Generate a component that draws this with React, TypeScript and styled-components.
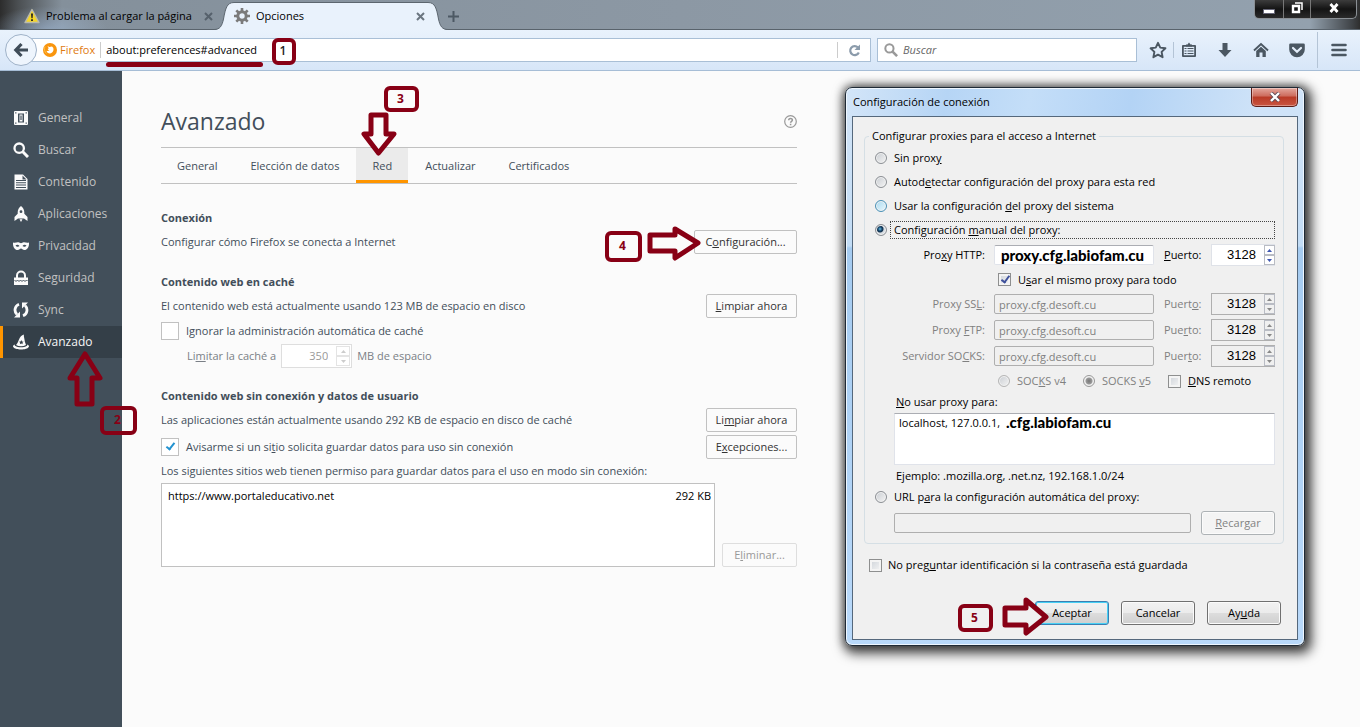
import React from 'react';
import styled, { createGlobalStyle, css } from 'styled-components';

const MARK = '#880015';

const GlobalStyle = createGlobalStyle`
  *, *::before, *::after { box-sizing: border-box; }
  body { margin: 0; background: #fbfbfb; font-family: "Open Sans", "Noto Sans", sans-serif; font-size: 11px; line-height: 18px; color: #000; }
  button, input, textarea { font: inherit; color: inherit; margin: 0; }
  u { text-underline-offset: 1px; }
`;

const Page = styled.div`
  position: relative;
  display: flex;
  flex-direction: column;
  min-height: 100vh;
  overflow: hidden;
`;

/* ---------- window title bar and tabs ---------- */

const TabStrip = styled.header`
  display: flex;
  height: 30px;
  background:
    radial-gradient(ellipse 60px 24px at 48px 30px, rgba(160, 185, 215, 0.6), transparent),
    linear-gradient(90deg, #2c2c2c 0, #4b4f52 18px, #84909b 62px, #8c98a4 50%, #93a1ae 1310px, #3f4347 1352px, #2e2e2e 100%);
  box-shadow: inset 0 -1px 0 #59636c;
`;

const InactiveTab = styled.div`
  display: flex;
  align-items: center;
  width: 214px;
  height: 30px;
  padding: 2px 0 0 24px;
  gap: 6px;
`;

const ActiveTab = styled.div`
  display: flex;
  height: 30px;
`;

const ActiveTabBody = styled.div`
  display: flex;
  align-items: center;
  width: 194px;
  gap: 6px;
  height: 28px;
  margin-top: 2px;
  padding: 0 2px 1px 0;
  border-top: 1px solid #5c666f;
  background: #e9f2fc;
`;

const TabTitle = styled.span`
  flex: 1;
  white-space: nowrap;
  overflow: hidden;
`;

const GlyphButton = styled.button`
  display: flex;
  align-items: center;
  justify-content: center;
  flex: none;
  border: 0;
  padding: 0;
  background: none;
`;

const NewTab = styled(GlyphButton)`
  width: 11px;
  height: 32px;
`;

const WindowButtons = styled.div`
  display: flex;
  height: 19px;
  margin: 0 3px 0 auto;
  border: 1px solid #8b9095;
  border-top: 0;
  border-radius: 0 0 5px 5px;
  background: linear-gradient(#3c3c3c, #141414 50%, #2a2a2a);
  overflow: hidden;
`;

const WindowButton = styled(GlyphButton)<{ $w: number }>`
  width: ${(p) => p.$w}px;
  padding-bottom: 2px;
  & + & { border-left: 1px solid #777; }
`;

/* ---------- navigation toolbar ---------- */

const NavBar = styled.nav`
  display: flex;
  align-items: center;
  height: 41px;
  padding-left: 5px;
  border-bottom: 1px solid #a6bdd6;
  background: linear-gradient(#e9f2fc, #d7e6f8);
`;

const BackButton = styled(GlyphButton)`
  position: relative;
  z-index: 1;
  width: 32px;
  height: 32px;
  border: 1px solid #9fb2c8;
  border-radius: 50%;
  background: #eef5fd;
`;

const Field = styled.div`
  display: flex;
  align-items: center;
  height: 24px;
  border: 1px solid #a9bfd6;
  background: #fff;
`;

const UrlField = styled(Field)`
  flex: 1;
  margin-left: -6px;
  padding-left: 11px;
`;

const Identity = styled.span`
  display: flex;
  align-items: center;
  gap: 3px;
  color: #e07a10;
  padding-right: 5px;
  border-right: 1px solid #ccc;
  height: 16px;
`;

const BareInput = styled.input`
  flex: 1;
  min-width: 0;
  border: 0;
  padding: 0 5px;
  background: none;
  outline: 0;
  &::placeholder { color: #666; font-style: italic; opacity: 1; }
`;

const Reload = styled(GlyphButton)`
  width: 33px;
  height: 16px;
  border-left: 1px solid #ccc;
`;

const SearchField = styled(Field)`
  width: 260px;
  margin: 0 6px;
  padding-left: 6px;
`;

const ToolButton = styled(GlyphButton)<{ $w: number }>`
  width: ${(p) => p.$w}px;
  height: 20px;
`;

const Divider = styled.span<{ $tall?: boolean }>`
  width: 1px;
  height: ${(p) => (p.$tall ? 36 : 16)}px;
  background: #b4c4d6;
`;

/* ---------- preferences page ---------- */

const Body = styled.div`
  display: flex;
  flex: 1;
`;

const Sidebar = styled.nav`
  flex: none;
  width: 122px;
  padding-top: 31px;
  background: #424f5a;
`;

const Category = styled.a<{ $active?: boolean }>`
  display: flex;
  align-items: center;
  gap: 9px;
  height: 32px;
  padding-left: 10px;
  border-left: 3px solid transparent;
  font-size: 12px;
  color: #c1c1c1;
  text-decoration: none;
  ${(p) => p.$active && css`
    border-left-color: #ff9500;
    background: #343f48;
    color: #f6f6f6;
  `}
`;

const Main = styled.main`
  flex: 1;
  min-width: 0;
  padding: 34px 39px 40px;
  color: #424e5a;
`;

const Content = styled.div`
  max-width: 636px;
`;

const TitleRow = styled.div`
  display: flex;
  align-items: center;
  justify-content: space-between;
  height: 32px;
  margin-bottom: 10px;
`;

const Title = styled.h1`
  margin: 0;
  font-size: 23px;
  font-weight: 400;
  line-height: 32px;
`;

const Tabs = styled.div`
  display: flex;
  gap: 1px;
  height: 37px;
  margin-bottom: 25px;
  border: solid #c1c1c1;
  border-width: 1px 0;
`;

const Tab = styled.button<{ $active?: boolean }>`
  border: 0;
  border-bottom: 3px solid ${(p) => (p.$active ? '#ff9500' : 'transparent')};
  background: ${(p) => (p.$active ? '#ebebeb' : 'none')};
  padding: 3px 16px 0;
`;

const Section = styled.section`
  display: flex;
  flex-direction: column;
  gap: 3px;
  margin-bottom: 19px;
`;

const Heading = styled.h2`
  margin: 0;
  font-size: 11px;
  line-height: 18px;
  font-weight: 700;
`;

const Row = styled.div<{ $h?: number }>`
  display: flex;
  align-items: center;
  justify-content: space-between;
  height: ${(p) => p.$h ?? 24}px;
  white-space: nowrap;
`;

const FlatButton = styled.button<{ $w: number }>`
  width: ${(p) => p.$w}px;
  height: 24px;
  flex: none;
  border: 1px solid #c1c1c1;
  border-radius: 2px;
  padding: 0;
  background: #fbfbfb;
  color: #333;
  &:disabled { color: #999; border-color: #dedede; }
`;

const CheckLabel = styled.label`
  display: flex;
  align-items: center;
  gap: 7px;
`;

const FlatCheck = styled.input`
  appearance: none;
  width: 18px;
  height: 18px;
  border: 1px solid #c1c1c1;
  background: #fff;
  &:checked::after {
    content: "";
    display: block;
    width: 5px;
    height: 9px;
    margin: 2px 0 0 6px;
    border: solid #2292d0;
    border-width: 0 2px 2px 0;
    transform: rotate(38deg);
  }
`;

const LimitRow = styled.div`
  display: flex;
  align-items: center;
  height: 24px;
  gap: 5px;
  padding-left: 26px;
  color: #7a7f86;
`;

const LimitBox = styled.span`
  display: flex;
  align-items: center;
  width: 71px;
  height: 24px;
  padding: 2px 1px;
  border: 1px solid #dedede;
  background: #fff;
  color: #999;
`;

const NumberInput = styled.input`
  flex: 1;
  min-width: 0;
  border: 0;
  padding: 0 8px 0 0;
  background: none;
  text-align: right;
  outline: 0;
`;

const Steppers = styled.span<{ $w: number }>`
  display: flex;
  flex-direction: column;
  width: ${(p) => p.$w}px;
  height: 20px;
`;

const StepButton = styled(GlyphButton)<{ $line: string; $ink: string }>`
  flex: 1;
  border: 1px solid ${(p) => p.$line};
  color: ${(p) => p.$ink};
`;

const SitesRow = styled.div`
  display: flex;
  align-items: flex-end;
  gap: 7px;
`;

const SiteList = styled.div`
  flex: 1;
  height: 84px;
  padding: 3px 3px 3px 6px;
  border: 1px solid #c1c1c1;
  background: #fff;
`;

const SiteTable = styled.table`
  width: 100%;
  border-collapse: collapse;
  color: #000;
  td { padding: 0; }
  td:last-child { text-align: right; }
`;

/* ---------- connection dialog ---------- */

const Dialog = styled.div`
  position: absolute;
  left: 845px;
  top: 87px;
  width: 460px;
  border: 1px solid #1f2a36;
  border-radius: 7px;
  padding: 0 6px 5px;
  background:
    linear-gradient(100deg, #d3e5f8 0, #b6d5f5 22%, #c4def8 40%, #b3d3f5 62%, #cfe3f8 90%) top / 100% 29px no-repeat,
    linear-gradient(#d3e4f6 0, #c2dcf5 158px, #a5cbf0 160px, #b9d9fa 100%);
  box-shadow: inset 0 0 0 1px #eef6fe, 3px 4px 12px 4px rgba(0, 0, 0, 0.65), 0 0 10px 1px rgba(0, 0, 0, 0.45);
`;

const DialogTitle = styled.div`
  display: flex;
  align-items: flex-start;
  justify-content: space-between;
  height: 28px;
  padding-left: 1px;
  h2 { margin: 5px 0 0; font-size: 11px; font-weight: 400; line-height: 18px; }
`;

const CloseButton = styled(GlyphButton)`
  width: 47px;
  height: 19px;
  border: 1px solid #5d1c16;
  border-top: 0;
  border-radius: 0 0 5px 5px;
  background: linear-gradient(#e3a79d, #cd6b5c 45%, #b93a26 50%, #c95541);
  box-shadow: inset 0 0 0 1px rgba(255, 255, 255, 0.35);
`;

const Client = styled.form`
  border: 1px solid #55687c;
  padding: 10px 13px 14px 11px;
  background: #f0f0f0;
`;

const Group = styled.fieldset`
  min-width: 0;
  margin: 0;
  padding: 1px 8px 8px 10px;
  border: 1px solid #d5dfe5;
  border-radius: 4px;
  legend { padding: 0 3px; margin-left: -6px; }
`;

const Choice = styled.label<{ $muted?: boolean }>`
  display: flex;
  align-items: center;
  height: 24px;
  gap: 7px;
  color: ${(p) => (p.$muted ? '#808080' : '#000')};
`;

const Focused = styled.span`
  flex: 1;
  height: 18px;
  margin-left: -4px;
  padding-left: 3px;
  border: 1px dotted #444;
  line-height: 16px;
`;

const Radio = styled.input<{ $hot?: boolean }>`
  appearance: none;
  flex: none;
  width: 12px;
  height: 12px;
  border: 1px solid ${(p) => (p.$hot ? '#4a90b5' : '#8b8f94')};
  border-radius: 50%;
  background: ${(p) => (p.$hot ? 'linear-gradient(135deg, #a9d9ef, #e9f7fd)' : 'linear-gradient(135deg, #c9cdd2, #f4f4f4)')};
  box-shadow: inset 0 0 0 1px #f2f2f2;
  &:checked { background: radial-gradient(circle at 4px 4px, #6cc3e8 0, #17466d 2px, #16344f 3px, #d8dde2 4px); }
  &:disabled { border-color: #b5b5b5; }
  &:disabled:checked { border-color: #999; background: radial-gradient(circle, #777 0, #999 3px, #eee 4px); }
`;

const Check = styled.input`
  appearance: none;
  flex: none;
  width: 13px;
  height: 13px;
  border: 1px solid #8e8f8f;
  background: linear-gradient(135deg, #cdd2d8, #f6f6f6);
  box-shadow: inset 0 0 0 2px #f4f4f4;
  &:checked::after {
    content: "";
    display: block;
    width: 5px;
    height: 9px;
    margin: 0 0 0 4px;
    border: solid #3f519b;
    border-width: 0 2px 2px 0;
    transform: rotate(36deg);
  }
`;

const ProxyRow = styled.div<{ $muted?: boolean }>`
  display: flex;
  align-items: center;
  height: 26px;
  color: ${(p) => (p.$muted ? '#808080' : '#000')};
`;

const HostLabel = styled.label`
  width: 110px;
  margin-right: 9px;
  text-align: right;
`;

const PortLabel = styled.label`
  width: 47px;
  margin-left: 10px;
`;

const TextBox = styled.input<{ $strong?: boolean }>`
  flex: 1;
  min-width: 0;
  height: 20px;
  padding: 0 4px;
  border: 1px solid #e0e3ea;
  border-top-color: #abadb3;
  border-radius: 2px;
  background: #fff;
  outline: 0;
  &:disabled { background: #f0f0f0; border-color: #afafaf; color: #808080; }
  ${(p) => p.$strong && css`
    padding: 0 6px;
    font-family: Lato, "Open Sans", sans-serif;
    font-size: 15px;
    font-weight: 900;
  `}
`;

const PortBox = styled.span<{ $off?: boolean }>`
  display: flex;
  align-items: center;
  width: 64px;
  height: 22px;
  border: 1px solid ${(p) => (p.$off ? '#afafaf' : '#dfe2e8')};
  border-right: 0;
  background: ${(p) => (p.$off ? '#f0f0f0' : '#fff')};
  color: #000;
  input { font-family: "Liberation Sans", Arial, sans-serif; font-size: 13px; }
`;

const SameProxy = styled.div`
  height: 23px;
  padding-left: 123px;
  label { height: 23px; }
`;

const SocksRow = styled.div`
  display: flex;
  padding-left: 123px;
  gap: 17px;
`;

const Indent = styled.div`
  padding-left: 19px;
`;

const Caption = styled.label`
  display: block;
  padding-left: 2px;
`;

const ExceptionsBox = styled.div`
  position: relative;
  margin: 2px 0;
`;

const Exceptions = styled.textarea`
  display: block;
  width: 100%;
  height: 52px;
  padding: 0 4px;
  border: 1px solid #e0e3ea;
  border-top-color: #abadb3;
  background: #fff;
  resize: none;
  outline: 0;
`;

const ExtraDomain = styled.strong`
  position: absolute;
  left: 112px;
  top: 0;
  font-family: Lato, "Open Sans", sans-serif;
  font-size: 15px;
  font-weight: 900;
`;

const UrlRow = styled.div`
  display: flex;
  align-items: center;
  gap: 10px;
  margin-top: 2px;
`;

const AeroButton = styled.button<{ $primary?: boolean }>`
  width: 74px;
  height: 24px;
  flex: none;
  padding: 0;
  border: 1px solid ${(p) => (p.$primary ? '#3c7fb1' : '#707070')};
  border-radius: 3px;
  background: linear-gradient(#f2f2f2, #ebebeb 50%, #dddddd 50%, #cfcfcf);
  box-shadow: inset 0 0 0 1px ${(p) => (p.$primary ? '#47d0f5' : '#fbfbfb')};
  &:disabled { border-color: #adb2b5; background: #f4f4f4; color: #838383; }
`;

const Remember = styled.div`
  margin-top: 12px;
  padding-left: 5px;
  label { height: 18px; gap: 6px; }
`;

const DialogButtons = styled.div`
  display: flex;
  justify-content: flex-end;
  gap: 12px;
  margin: 27px 3px 0 0;
`;

/* ---------- step marks drawn over the window ---------- */

const StepBox = styled.span<{ $x: number; $y: number; $w: number; $h: number; $fill?: string; $plain?: boolean }>`
  position: absolute;
  left: ${(p) => p.$x}px;
  top: ${(p) => p.$y}px;
  width: ${(p) => p.$w}px;
  height: ${(p) => p.$h}px;
  display: flex;
  align-items: center;
  justify-content: center;
  padding: 0 2px 1px 0;
  border: 4px solid ${MARK};
  border-radius: 6px;
  background: ${(p) => p.$fill ?? 'transparent'};
  color: ${(p) => (p.$plain ? '#222' : MARK)};
  font-size: 12px;
  font-weight: ${(p) => (p.$plain ? 600 : 700)};
  line-height: 16px;
`;

const Underline = styled.span`
  position: absolute;
  left: 106px;
  top: 62px;
  width: 157px;
  height: 5px;
  border-radius: 3px;
  background: ${MARK};
`;

const ArrowSvg = styled.svg<{ $x: number; $y: number }>`
  position: absolute;
  left: ${(p) => p.$x}px;
  top: ${(p) => p.$y}px;
  pointer-events: none;
`;

const Arrow = ({ x, y, w, h, d, fill = 'none' }: { x: number; y: number; w: number; h: number; d: string; fill?: string }) => (
  <ArrowSvg $x={x} $y={y} width={w} height={h} aria-hidden="true">
    <path d={d} fill={fill} stroke={MARK} strokeWidth="5" strokeLinejoin="round" />
  </ArrowSvg>
);

/* ---------- icons ---------- */

const Cross = ({ color = '#6b7680' }: { color?: string }) => (
  <svg width="9" height="9" viewBox="0 0 9 9"><path d="M1 1l7 7M8 1L1 8" stroke={color} strokeWidth="2" /></svg>
);

const Warning = () => (
  <svg width="16" height="16" viewBox="0 0 16 16">
    <path d="M8 1.500L15 14.500H1z" fill="#f5d62a" stroke="#b9b9ad" strokeWidth="1.400" strokeLinejoin="round" />
    <path d="M7 5.500h2l-.4 4.800H7.400zM7.100 11.300h1.800v1.700H7.100z" fill="#222" />
  </svg>
);

const Gear = () => (
  <svg width="16" height="16" viewBox="0 0 16 16" fill="none" stroke="#7b7b7b">
    <circle cx="8" cy="8" r="4.200" strokeWidth="3" />
    <path d="M8 0v3M8 13v3M0 8h3M13 8h3M2.300 2.300l2.200 2.200M11.500 11.500l2.200 2.200M13.700 2.300l-2.200 2.200M4.500 11.500l-2.200 2.200" strokeWidth="2.600" />
  </svg>
);

const TabEdge = ({ right }: { right?: boolean }) => (
  <svg width="20" height="30" viewBox="0 0 20 30">
    <g transform={right ? 'translate(20 0) scale(-1 1)' : undefined}>
      <path d="M0 30C6 29.500 8 26 9.500 19C11.500 8 13 2.500 20 2.500V30z" fill="#e9f2fc" />
      <path d="M0 29.500C6 29.500 8 26 9.500 19C11.500 8 13 2.500 20 2.500" fill="none" stroke="#5c666f" />
    </g>
  </svg>
);

const BackArrow = () => (
  <svg width="16" height="16" viewBox="0 0 16 16"><path d="M8.500 2L2.800 8l5.700 6M3 8h12" fill="none" stroke="#404d59" strokeWidth="3.200" /></svg>
);

const FirefoxLogo = () => (
  <svg width="14" height="14" viewBox="0 0 14 14">
    <circle cx="7" cy="7" r="7" fill="#f9950d" />
    <path d="M4.500 3l1.800 1L9 3.600l1.200 1.200c1 2.800-.6 5.600-3.200 5.600-1.900 0-3.200-1.200-3.500-2.700 1 .7 2.400.5 3-.4-1.200 0-1.900-.8-1.700-1.600l1-.3z" fill="#fff" />
    <path d="M2 3.500C1 6 1.500 9 3.500 10.500" stroke="#fdc04a" fill="none" />
  </svg>
);

const ReloadIcon = () => (
  <svg width="13" height="13" viewBox="0 0 13 13">
    <path d="M10 3.500A4.500 4.500 0 1 0 10.800 8.500" fill="none" stroke="#8b9bab" strokeWidth="2.200" />
    <path d="M12 .5V6H6.500z" fill="#8b9bab" />
  </svg>
);

const Magnifier = ({ size, color }: { size: number; color: string }) => (
  <svg width={size} height={size} viewBox="0 0 16 16" fill="none" stroke={color}>
    <circle cx="6.200" cy="6.200" r="4.700" strokeWidth="2.300" />
    <path d="M9.800 9.800L15 15" strokeWidth="3" />
  </svg>
);

const INK = '#4b5762';
const Star = () => (
  <svg width="18" height="18" viewBox="0 0 16 16"><path d="M8 1.600l2 4.300 4.600.6-3.400 3.200.9 4.700L8 12.100l-4.100 2.300.9-4.700L1.400 6.500 6 5.900z" fill="none" stroke={INK} strokeWidth="1.700" strokeLinejoin="round" /></svg>
);
const Clipboard = () => (
  <svg width="16" height="16" viewBox="0 0 16 16">
    <path d="M1.900 3.900h12.200v10.200H1.900z" fill="none" stroke={INK} strokeWidth="1.800" strokeLinejoin="round" />
    <path d="M5 4.500V2.500h1.500L8 .5l1.500 2H11v2z" fill={INK} />
    <path d="M3.500 6.500h2M6.500 6.500h6M3.500 9h2M6.500 9h6M3.500 11.500h2M6.500 11.500h6" stroke={INK} strokeWidth="1.200" />
  </svg>
);
const Download = () => (
  <svg width="14" height="16" viewBox="0 0 14 16"><path d="M4.500 1h5v7H13.500L7 15 .5 8h4z" fill={INK} /></svg>
);
const Home = () => (
  <svg width="16" height="16" viewBox="0 0 16 16">
    <path d="M1 8.500L8 2l7 6.500" fill="none" stroke={INK} strokeWidth="1.900" />
    <path d="M3.200 9L8 4.700 12.800 9v6H9.500v-4.500h-3V15H3.200z" fill={INK} />
  </svg>
);
const Pocket = () => (
  <svg width="16" height="15" viewBox="0 0 16 15">
    <path d="M1.500.5h13q1.300 0 1.300 1.300V6.500a7.800 7.800 0 0 1-15.600 0V1.800Q.2.500 1.500.5z" fill={INK} />
    <path d="M4 5l4 3.800L12 5" fill="none" stroke="#e4eefa" strokeWidth="2.200" strokeLinecap="round" />
  </svg>
);
const Menu = () => (
  <svg width="16" height="14" viewBox="0 0 16 14"><path d="M1.500 2h13M1.500 7h13M1.500 12h13" stroke={INK} strokeWidth="2.600" strokeLinecap="round" /></svg>
);

const SideIcon = ({ children }: { children: React.ReactNode }) => (
  <svg width="16" height="16" viewBox="0 0 16 16" fill="#fbfbfb">{children}</svg>
);

const categories: { label: string; active?: boolean; icon: React.ReactNode }[] = [
  { label: 'General', icon: <SideIcon><path fillRule="evenodd" d="M2 1h12q1 0 1 1v12q0 1-1 1H2q-1 0-1-1V2q0-1 1-1zM5 3.500v9h6v-9zM6.500 4.500h3v7h-3zM7.400 5.500v4.500h1.200V5.500zM2.200 2.200v1.200h1.200V2.200zM12.600 2.200v1.200h1.200V2.200zM2.200 12.600v1.200h1.200v-1.200zM12.600 12.600v1.200h1.200v-1.200z" /></SideIcon> },
  { label: 'Buscar', icon: <Magnifier size={16} color="#fbfbfb" /> },
  { label: 'Contenido', icon: <SideIcon><path fillRule="evenodd" d="M1.500.5H10l4.500 4.500v10.500h-13zM3 6v1h10V6zM3 8.300v1h10v-1zM3 10.600v1h10v-1zM3 12.900v1h10v-1zM9.500 1.500V5.500h4z" /></SideIcon> },
  { label: 'Aplicaciones', icon: <SideIcon><path fillRule="evenodd" d="M8 0c2 1.500 3.300 3.800 3.300 6.200v1.600L14.500 11v4l-3.500-2.500H5L1.500 15v-4l3.200-3.200V6.200C4.700 3.800 6 1.500 8 0zM8 4.300a1.400 1.400 0 1 0 0 2.800 1.400 1.400 0 0 0 0-2.800z" /><path d="M6.500 13.300h3L8 16z" /></SideIcon> },
  { label: 'Privacidad', icon: <SideIcon><path fillRule="evenodd" d="M0 4.500c2.500.8 3.500-.5 5.500-.2L8 5.300l2.500-1c2-.3 3 1 5.500.2.300 4-1.500 7.500-4.500 7.500C9.600 12 9 10.500 8 10.500S6.400 12 4.500 12C1.500 12-.3 8.500 0 4.500zM2.500 7.500c1 1.600 3 1.600 4 .5-1-1.300-2.700-1.500-4-.5zM13.500 7.500c-1.300-1-3-.8-4 .5 1 1.100 3 1.100 4-.5z" /></SideIcon> },
  { label: 'Seguridad', icon: <SideIcon><path d="M4 8V5.500a4 4 0 0 1 8 0V8" fill="none" stroke="#fbfbfb" strokeWidth="2" /><path d="M1 7.500h14V15H1z" /><path d="M1.500 10l1.500 1.500L4.500 10 6 11.500 7.500 10 9 11.500l1.500-1.500 1.500 1.500L13.500 10l1 1" fill="none" stroke="#424f5a" /></SideIcon> },
  { label: 'Sync', icon: <SideIcon><path d="M6 2.200A6.200 6.200 0 0 0 4 12.500M10 13.800A6.200 6.200 0 0 0 12 3.500" fill="none" stroke="#fbfbfb" strokeWidth="2.800" /><path d="M7 9.500V15.500H1zM9 6.500V.5h6z" /></SideIcon> },
  { label: 'Avanzado', active: true, icon: <SideIcon><path fillRule="evenodd" d="M11 .5c-.5 1.500.2 2.500.3 4 .2 2 .8 4.300 1.700 6.500-3 1.600-7 1.600-10 0 1.300-1 2-3 3-5.500C7 3 8.500 1.200 11 .5zM8.300 6l-.7 1.500-1.600.2 1.200 1-.3 1.600 1.400-.8 1.400.8-.3-1.600 1.200-1L9 7.500z" /><path d="M1.800 10.500C.3 11.200 0 12 0 12.500 1 14.800 4.500 15.500 8 15.500s7-.7 8-3c0-.5-.3-1.300-1.800-2 .2.700.1 1-.2 1.300-3.500 2-8.500 2-12 0-.3-.3-.4-.6-.2-1.300z" /></SideIcon> },
];

const Triangle = ({ down }: { down?: boolean }) => (
  <svg width="5" height="3" viewBox="0 0 5 3"><path d={down ? 'M0 0h5L2.500 3z' : 'M0 3h5L2.500 0z'} fill="currentColor" /></svg>
);

const Spinner = ({ w, off, faint }: { w: number; off?: boolean; faint?: boolean }) => {
  const line = faint ? '#e4e4e4' : '#b9bcc4';
  const ink = faint ? '#ccc' : off ? '#888' : '#3f57b0';
  return (
    <Steppers $w={w}>
      <StepButton type="button" aria-label="Aumentar" disabled={off} $line={line} $ink={ink}><Triangle /></StepButton>
      <StepButton type="button" aria-label="Disminuir" disabled={off} $line={line} $ink={ink}><Triangle down /></StepButton>
    </Steppers>
  );
};

const Port = ({ id, off }: { id: string; off?: boolean }) => (
  <PortBox $off={off}>
    <NumberInput id={id} defaultValue="3128" readOnly={off} />
    <Spinner w={11} off={off} />
  </PortBox>
);

const proxies = [
  { id: 'ssl', host: <>Proxy SS<u>L</u>:</>, port: <>Puert<u>o</u>:</> },
  { id: 'ftp', host: <>Proxy <u>F</u>TP:</>, port: <>Pue<u>r</u>to:</> },
  { id: 'socks', host: <>Servidor SO<u>C</u>KS:</>, port: <>Puer<u>t</u>o:</> },
];

const ConnectionDialog = () => (
  <Dialog role="dialog" aria-label="Configuración de conexión">
    <DialogTitle>
      <h2>Configuración de conexión</h2>
      <CloseButton type="button" aria-label="Cerrar">
        <svg width="12" height="10" viewBox="0 0 12 10"><path d="M2 1l8 8M10 1L2 9" stroke="#5a4a55" strokeWidth="4" /><path d="M2 1l8 8M10 1L2 9" stroke="#fff" strokeWidth="2.400" /></svg>
      </CloseButton>
    </DialogTitle>
    <Client>
      <Group>
        <legend>Configurar proxies para el acceso a Internet</legend>
        <Choice><Radio type="radio" name="mode" /><span>Sin prox<u>y</u></span></Choice>
        <Choice><Radio type="radio" name="mode" /><span>Autod<u>e</u>tectar configuración del proxy para esta red</span></Choice>
        <Choice><Radio type="radio" name="mode" $hot /><span>Usar la configuración <u>d</u>el proxy del sistema</span></Choice>
        <Choice><Radio type="radio" name="mode" defaultChecked /><Focused>Configuración <u>m</u>anual del proxy:</Focused></Choice>
        <ProxyRow>
          <HostLabel htmlFor="http">Pro<u>x</u>y HTTP:</HostLabel>
          <TextBox id="http" $strong defaultValue="proxy.cfg.labiofam.cu" />
          <PortLabel htmlFor="http-port"><u>P</u>uerto:</PortLabel>
          <Port id="http-port" />
        </ProxyRow>
        <SameProxy>
          <Choice><Check type="checkbox" defaultChecked /><span>U<u>s</u>ar el mismo proxy para todo</span></Choice>
        </SameProxy>
        {proxies.map((p) => (
          <ProxyRow key={p.id} $muted>
            <HostLabel htmlFor={p.id}>{p.host}</HostLabel>
            <TextBox id={p.id} disabled defaultValue="proxy.cfg.desoft.cu" />
            <PortLabel htmlFor={`${p.id}-port`}>{p.port}</PortLabel>
            <Port id={`${p.id}-port`} off />
          </ProxyRow>
        ))}
        <SocksRow>
          <Choice $muted><Radio type="radio" name="socks-version" disabled /><span>SOC<u>K</u>S v4</span></Choice>
          <Choice $muted><Radio type="radio" name="socks-version" disabled defaultChecked /><span>SOCKS <u>v</u>5</span></Choice>
          <Choice><Check type="checkbox" /><span><u>D</u>NS remoto</span></Choice>
        </SocksRow>
        <Indent>
          <Caption htmlFor="exceptions"><u>N</u>o usar proxy para:</Caption>
          <ExceptionsBox>
            <Exceptions id="exceptions" defaultValue="localhost, 127.0.0.1," />
            <ExtraDomain>.cfg.labiofam.cu</ExtraDomain>
          </ExceptionsBox>
          <Caption as="div">Ejemplo: .mozilla.org, .net.nz, 192.168.1.0/24</Caption>
        </Indent>
        <Choice><Radio type="radio" name="mode" /><span>URL p<u>a</u>ra la configuración automática del proxy:</span></Choice>
        <Indent>
          <UrlRow>
            <TextBox disabled aria-label="URL de configuración" />
            <AeroButton type="button" disabled><u>R</u>ecargar</AeroButton>
          </UrlRow>
        </Indent>
      </Group>
      <Remember>
        <Choice><Check type="checkbox" /><span>No preg<u>u</u>ntar identificación si la contraseña está guardada</span></Choice>
      </Remember>
      <DialogButtons>
        <AeroButton type="button" $primary>Aceptar</AeroButton>
        <AeroButton type="button">Cancelar</AeroButton>
        <AeroButton type="button">Ay<u>u</u>da</AeroButton>
      </DialogButtons>
    </Client>
  </Dialog>
);

export default function App() {
  return (
    <Page>
      <GlobalStyle />
      <TabStrip>
        <InactiveTab>
          <Warning />
          <TabTitle>Problema al cargar la página</TabTitle>
          <NewTab aria-label="Cerrar pestaña"><Cross color="#56616c" /></NewTab>
        </InactiveTab>
        <ActiveTab>
          <TabEdge />
          <ActiveTabBody>
            <Gear />
            <TabTitle>Opciones</TabTitle>
            <NewTab aria-label="Cerrar pestaña"><Cross /></NewTab>
          </ActiveTabBody>
          <TabEdge right />
        </ActiveTab>
        <NewTab aria-label="Nueva pestaña">
          <svg width="11" height="11" viewBox="0 0 11 11"><path d="M5.500 0v11M0 5.500h11" stroke="#4d5964" strokeWidth="2" /></svg>
        </NewTab>
        <WindowButtons>
          <WindowButton $w={28} aria-label="Minimizar">
            <svg width="12" height="12" viewBox="0 0 12 12"><path d="M.5 7.500h11v4H.5z" fill="#fff" stroke="#667" /></svg>
          </WindowButton>
          <WindowButton $w={27} aria-label="Restaurar">
            <svg width="12" height="12" viewBox="0 0 12 12" fill="none" stroke="#fff"><path d="M4 1h7v7" strokeWidth="1.500" /><path d="M2 4h6v6H2z" strokeWidth="2.400" /></svg>
          </WindowButton>
          <WindowButton $w={46} aria-label="Cerrar">
            <svg width="12" height="10" viewBox="0 0 12 10"><path d="M2.500 1l7 8M9.500 1l-7 8" stroke="#fff" strokeWidth="2.800" /></svg>
          </WindowButton>
        </WindowButtons>
      </TabStrip>

      <NavBar>
        <BackButton aria-label="Atrás"><BackArrow /></BackButton>
        <UrlField>
          <Identity><FirefoxLogo />Firefox</Identity>
          <BareInput aria-label="Dirección" defaultValue="about:preferences#advanced" />
          <Reload aria-label="Recargar"><ReloadIcon /></Reload>
        </UrlField>
        <SearchField>
          <Magnifier size={14} color="#999" />
          <BareInput aria-label="Buscar" placeholder="Buscar" />
        </SearchField>
        <ToolButton $w={30} aria-label="Marcador"><Star /></ToolButton>
        <Divider />
        <ToolButton $w={30} aria-label="Lista de marcadores"><Clipboard /></ToolButton>
        <ToolButton $w={42} aria-label="Descargas"><Download /></ToolButton>
        <ToolButton $w={30} aria-label="Inicio"><Home /></ToolButton>
        <ToolButton $w={41} aria-label="Pocket"><Pocket /></ToolButton>
        <Divider $tall />
        <ToolButton $w={42} aria-label="Menú"><Menu /></ToolButton>
      </NavBar>

      <Body>
        <Sidebar>
          {categories.map((c) => (
            <Category key={c.label} href={`#${c.label.toLowerCase()}`} $active={c.active}>
              {c.icon}
              {c.label}
            </Category>
          ))}
        </Sidebar>
        <Main>
          <Content>
            <TitleRow>
              <Title>Avanzado</Title>
              <GlyphButton aria-label="Ayuda">
                <svg width="13" height="13" viewBox="0 0 13 13" fill="none" stroke="#999">
                  <circle cx="6.500" cy="6.500" r="5.800" strokeWidth="1.200" />
                  <path d="M4.700 5.200c0-2.400 3.700-2.300 3.700-.2 0 1.300-1.800 1.300-1.800 2.800M6.600 8.700v1.500" strokeWidth="1.500" />
                </svg>
              </GlyphButton>
            </TitleRow>
            <Tabs>
              <Tab>General</Tab>
              <Tab>Elección de datos</Tab>
              <Tab $active>Red</Tab>
              <Tab>Actualizar</Tab>
              <Tab>Certificados</Tab>
            </Tabs>

            <Section>
              <Heading>Conexión</Heading>
              <Row>
                <span>Configurar cómo Firefox se conecta a Internet</span>
                <FlatButton $w={103}>C<u>o</u>nfiguración...</FlatButton>
              </Row>
            </Section>

            <Section>
              <Heading>Contenido web en caché</Heading>
              <Row>
                <span>El contenido web está actualmente usando 123 MB de espacio en disco</span>
                <FlatButton $w={91}><u>L</u>impiar ahora</FlatButton>
              </Row>
              <Row $h={20}>
                <CheckLabel><FlatCheck type="checkbox" /><span>I<u>g</u>norar la administración automática de caché</span></CheckLabel>
              </Row>
              <LimitRow>
                <label htmlFor="limit">Li<u>m</u>itar la caché a</label>
                <LimitBox>
                  <NumberInput id="limit" disabled defaultValue="350" />
                  <Spinner w={14} off faint />
                </LimitBox>
                <span>MB de espacio</span>
              </LimitRow>
            </Section>

            <Section>
              <Heading>Contenido web sin conexión y datos de usuario</Heading>
              <Row>
                <span>Las aplicaciones están actualmente usando 292 KB de espacio en disco de caché</span>
                <FlatButton $w={91}>Li<u>m</u>piar ahora</FlatButton>
              </Row>
              <Row>
                <CheckLabel><FlatCheck type="checkbox" defaultChecked /><span>Avisarme si un si<u>t</u>io solicita guardar datos para uso sin conexión</span></CheckLabel>
                <FlatButton $w={91}>E<u>x</u>cepciones...</FlatButton>
              </Row>
              <Row $h={18}>Los siguientes sitios web tienen permiso para guardar datos para el uso en modo sin conexión:</Row>
              <SitesRow>
                <SiteList>
                  <SiteTable>
                    <tbody><tr><td>https://www.portaleducativo.net</td><td>292 KB</td></tr></tbody>
                  </SiteTable>
                </SiteList>
                <FlatButton $w={75} disabled>E<u>l</u>iminar...</FlatButton>
              </SitesRow>
            </Section>
          </Content>
        </Main>
      </Body>

      <ConnectionDialog />

      <Underline />
      <StepBox $x={272} $y={38} $w={24} $h={27} $fill="#fff" $plain>1</StepBox>
      <StepBox $x={100} $y={406} $w={37} $h={29}>2</StepBox>
      <StepBox $x={384} $y={86} $w={35} $h={26} $fill="#fbfbfb">3</StepBox>
      <StepBox $x={605} $y={231} $w={37} $h={31} $fill="#fbfbfb">4</StepBox>
      <StepBox $x={958} $y={604} $w={35} $h={28} $fill="#f0f0f0">5</StepBox>
      <Arrow x={65} y={350} w={40} h={58} d="M20 4L35 28H27V54H12V28H5z" />
      <Arrow x={359} y={110} w={40} h={48} d="M12 5H27V24H35L19.500 43L5 24H12z" fill="#fbfbfb" />
      <Arrow x={645} y={224} w={58} h={39} d="M5 11H30V5L53 19L30 34V27H5z" fill="#fbfbfb" />
      <Arrow x={1000} y={595} w={51} h={43} d="M5 13H26V5L46 22L26 38V30H5z" fill="#f0f0f0" />
    </Page>
  );
}
